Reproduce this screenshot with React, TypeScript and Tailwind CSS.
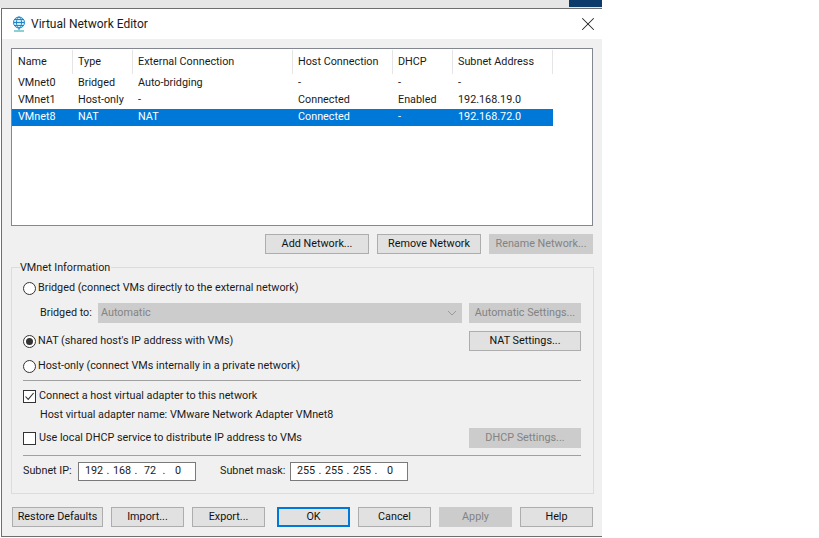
import { X } from "lucide-react";

const columns = [
  { label: "Name", width: "w-[60px]" },
  { label: "Type", width: "w-[60px]" },
  { label: "External Connection", width: "w-[160px]" },
  { label: "Host Connection", width: "w-[100px]" },
  { label: "DHCP", width: "w-[60px]" },
  { label: "Subnet Address", width: "w-[100px]" },
];

const rows = [
  ["VMnet0", "Bridged", "Auto-bridging", "-", "-", "-"],
  ["VMnet1", "Host-only", "-", "Connected", "Enabled", "192.168.19.0"],
  ["VMnet8", "NAT", "NAT", "Connected", "-", "192.168.72.0"],
];

function Button({
  children,
  width,
  disabled,
  primary,
}: {
  children: string;
  width: string;
  disabled?: boolean;
  primary?: boolean;
}) {
  const look = disabled
    ? "border border-[#cccccc] bg-[#cccccc] text-[#838383]"
    : primary
      ? "border-2 border-[#0078d7] bg-[#e1e1e1] text-[#111]"
      : "border border-[#adadad] bg-[#e1e1e1] text-[#111]";
  return (
    <button className={`flex h-[20px] shrink-0 items-center justify-center whitespace-nowrap text-[10.8px] ${width} ${look}`}>
      {children}
    </button>
  );
}

function Radio({ checked, label }: { checked?: boolean; label: string }) {
  return (
    <div className="flex h-[14px] items-center">
      <span className="flex h-[13px] w-[13px] shrink-0 items-center justify-center rounded-full border border-[#333] bg-white">
        {checked && <span className="h-[7px] w-[7px] rounded-full bg-[#333]" />}
      </span>
      <span className="ml-[2px] whitespace-nowrap">{label}</span>
    </div>
  );
}

function Check({ checked, label }: { checked?: boolean; label: string }) {
  return (
    <div className="flex h-[14px] items-center">
      <span className="flex h-[13px] w-[13px] shrink-0 items-center justify-center border border-[#333] bg-white">
        {checked && (
          <svg width="11" height="11" viewBox="0 0 11 11" fill="none" stroke="#333" strokeWidth="1.1">
            <path d="M1.5 5.5 L4.2 8.4 L9.6 2" />
          </svg>
        )}
      </span>
      <span className="ml-[3px] whitespace-nowrap">{label}</span>
    </div>
  );
}

function IpField({ parts }: { parts: string[] }) {
  return (
    <div className="flex h-[19px] w-[118px] items-center border border-[#7a7a7a] bg-white pl-[4px]">
      {parts.map((part, i) => (
        <span key={i} className="flex items-center">
          <span className="w-[22px] text-center">{part}</span>
          {i < 3 && <span className="w-[6px] text-center">.</span>}
        </span>
      ))}
    </div>
  );
}

export default function App() {
  return (
    <div className="h-[538px] w-[819px] overflow-hidden bg-white font-['Roboto',sans-serif] text-[10.8px] text-[#1a1a1a]">
      <div className="w-[602px]">
        <div className="flex h-[8px] justify-end bg-[#e6e6e6]">
          <div className="h-[7px] w-[33px] bg-[#0b3a6b]" />
        </div>
        <div className="ml-[1px] flex h-[529px] flex-col border-t border-b border-l border-[#6e6e6e] bg-[#f0f0f0]">
          {/* title bar */}
          <div className="flex h-[30px] shrink-0 items-center bg-white pl-[10px] pr-[3px]">
            <svg width="14" height="16" viewBox="0 0 14 16" fill="none" stroke="#1c86c8" strokeWidth="1">
              <circle cx="7" cy="6.5" r="5.5" fill="#d6eefa" />
              <ellipse cx="7" cy="6.5" rx="2.5" ry="5.5" />
              <path d="M1.5 6.5h11M2.5 3.5h9M2.5 9.5h9M7 12v2" />
              <path d="M2 15h10" stroke="#17a5a5" />
            </svg>
            <span className="ml-[5px] text-[12px]">Virtual Network Editor</span>
            <X className="ml-auto" size={22} strokeWidth={1.1} color="#222" />
          </div>

          <div className="flex flex-1 flex-col pl-[9px] pr-[9px] pt-[9px]">
            {/* network list */}
            <div className="h-[178px] shrink-0 border border-[#828790] bg-white">
              <div className="flex h-[25px] items-center pl-[1px]">
                {columns.map((col) => (
                  <div key={col.label} className={`h-[24px] whitespace-nowrap border-r border-[#e5e5e5] pl-[5px] leading-[24px] ${col.width}`}>
                    {col.label}
                  </div>
                ))}
              </div>
              <div className="mt-[1px] w-[541px]">
                {rows.map((row, i) => (
                  <div key={row[0]} className={`flex h-[17px] items-center ${i === 2 ? "bg-[#0078d7] text-white" : ""}`}>
                    {row.map((cell, j) => (
                      <div key={j} className={`pl-[6px] ${columns[j].width}`}>
                        {cell}
                      </div>
                    ))}
                  </div>
                ))}
              </div>
            </div>

            <div className="mt-[8px] flex shrink-0 justify-end gap-[8px]">
              <Button width="w-[104px]">Add Network...</Button>
              <Button width="w-[104px]">Remove Network</Button>
              <Button width="w-[104px]" disabled>Rename Network...</Button>
            </div>

            {/* VMnet information group */}
            <div className="relative mt-[13px] h-[227px] w-[583px] shrink-0 border border-[#dcdcdc] pl-[11px] pr-[12px] pt-[13px]">
              <span className="absolute -top-[7px] left-[8px] bg-[#f0f0f0] pr-[1px] leading-[14px]">VMnet Information</span>
              <Radio label="Bridged (connect VMs directly to the external network)" />
              <div className="mt-[8px] flex items-center">
                <span className="ml-[17px] w-[58px] whitespace-nowrap">Bridged to:</span>
                <div className="flex h-[20px] w-[364px] items-center justify-between bg-[#cccccc] pl-[3px] pr-[5px] text-[#838383]">
                  Automatic
                  <svg width="10" height="6" viewBox="0 0 10 6" fill="none" stroke="#9a9a9a">
                    <path d="M1 1 L5 5 L9 1" />
                  </svg>
                </div>
                <div className="ml-[7px]">
                  <Button width="w-[112px]" disabled>Automatic Settings...</Button>
                </div>
              </div>
              <div className="mt-[8px] flex items-center justify-between">
                <Radio checked label="NAT (shared host's IP address with VMs)" />
                <Button width="w-[112px]">NAT Settings...</Button>
              </div>
              <div className="mt-[8px]">
                <Radio label="Host-only (connect VMs internally in a private network)" />
              </div>
              <div className="mt-[7px] h-px bg-[#a0a0a0]" />
              <div className="mt-[8px]">
                <Check checked label="Connect a host virtual adapter to this network" />
              </div>
              <div className="ml-[17px] mt-[4px] whitespace-nowrap leading-[16px]">Host virtual adapter name: VMware Network Adapter VMnet8</div>
              <div className="mt-[5px] flex items-center justify-between">
                <Check label="Use local DHCP service to distribute IP address to VMs" />
                <Button width="w-[112px]" disabled>DHCP Settings...</Button>
              </div>
              <div className="mt-[7px] h-px bg-[#a0a0a0]" />
              <div className="mt-[6px] flex items-center">
                <span className="w-[55px] whitespace-nowrap">Subnet IP:</span>
                <IpField parts={["192", "168", "72", "0"]} />
                <span className="ml-[24px] w-[70px] whitespace-nowrap">Subnet mask:</span>
                <IpField parts={["255", "255", "255", "0"]} />
              </div>
            </div>

            <div className="mt-[13px] flex shrink-0 gap-[8px] pl-[1px]">
              <Button width="w-[91px]">Restore Defaults</Button>
              <Button width="w-[73px]">Import...</Button>
              <Button width="w-[73px]">Export...</Button>
              <div className="ml-[4px]">
                <Button width="w-[73px]" primary>OK</Button>
              </div>
              <Button width="w-[73px]">Cancel</Button>
              <Button width="w-[73px]" disabled>Apply</Button>
              <Button width="w-[73px]">Help</Button>
            </div>
          </div>
        </div>
      </div>
    </div>
  );
}
